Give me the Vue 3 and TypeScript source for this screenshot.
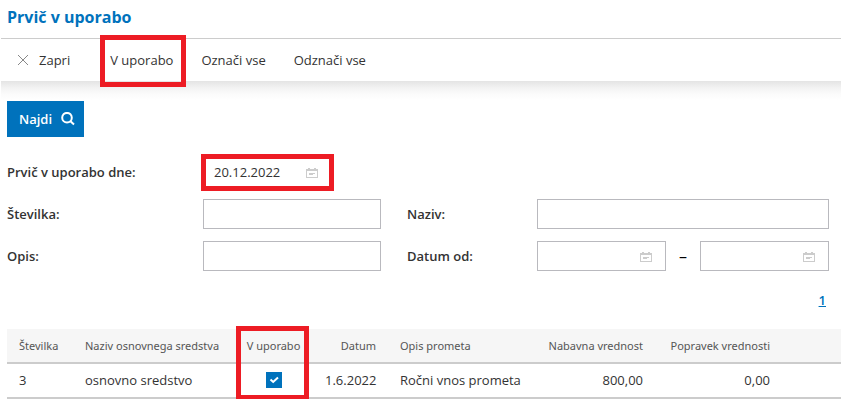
<script setup lang="ts">
import { ref, reactive } from 'vue'

interface AssetRow {
  number: number
  name: string
  inUse: boolean
  date: string
  description: string
  purchaseValue: string
  adjustment: string
}

const firstUseDate = ref('20.12.2022')
const filters = reactive({ number: '', name: '', description: '', from: '', to: '' })

const rows = ref<AssetRow[]>([
  {
    number: 3,
    name: 'osnovno sredstvo',
    inUse: true,
    date: '1.6.2022',
    description: 'Ročni vnos prometa',
    purchaseValue: '800,00',
    adjustment: '0,00',
  },
])

function markAll(value: boolean): void {
  rows.value.forEach((row) => (row.inUse = value))
}
</script>

<template>
  <main class="page">
    <h1 class="title">Prvič v uporabo</h1>

    <nav class="toolbar">
      <button type="button" class="tool close">
        <svg class="close-icon" viewBox="0 0 12 12" aria-hidden="true">
          <path d="M1 1 11 11M11 1 1 11" />
        </svg>
        Zapri
      </button>
      <button type="button" class="tool marked marked-tool">V uporabo</button>
      <button type="button" class="tool" @click="markAll(true)">Označi vse</button>
      <button type="button" class="tool" @click="markAll(false)">Odznači vse</button>
    </nav>

    <form class="search" @submit.prevent>
      <button type="submit" class="find">
        Najdi
        <svg class="find-icon" viewBox="0 0 14 14" aria-hidden="true">
          <circle cx="6" cy="5.7" r="4.8" />
          <path d="M9.5 9.2 13 12.5" />
        </svg>
      </button>

      <div class="fields">
        <label for="first-use">Prvič v uporabo dne:</label>
        <div class="wide">
          <div class="date marked marked-date">
            <input id="first-use" v-model="firstUseDate" type="text" />
            <svg class="calendar" viewBox="0 0 12 10" aria-hidden="true">
              <path class="calendar-fill" d="M0 1h2V0h2v1h4V0h2v1h2v9H0zM1 3v6h10V3z" />
              <path class="calendar-line" d="M3 5.5h6M3 6.5h4" />
            </svg>
          </div>
        </div>

        <label for="number">Številka:</label>
        <input id="number" v-model="filters.number" type="text" />
        <label for="name" class="second">Naziv:</label>
        <input id="name" v-model="filters.name" type="text" />

        <label for="description">Opis:</label>
        <input id="description" v-model="filters.description" type="text" />
        <label for="date-from" class="second">Datum od:</label>
        <div class="range">
          <div class="date">
            <input id="date-from" v-model="filters.from" type="text" />
            <svg class="calendar" viewBox="0 0 12 10" aria-hidden="true">
              <path class="calendar-fill" d="M0 1h2V0h2v1h4V0h2v1h2v9H0zM1 3v6h10V3z" />
              <path class="calendar-line" d="M3 5.5h6M3 6.5h4" />
            </svg>
          </div>
          <label for="date-to" class="dash">–</label>
          <div class="date">
            <input id="date-to" v-model="filters.to" type="text" />
            <svg class="calendar" viewBox="0 0 12 10" aria-hidden="true">
              <path class="calendar-fill" d="M0 1h2V0h2v1h4V0h2v1h2v9H0zM1 3v6h10V3z" />
              <path class="calendar-line" d="M3 5.5h6M3 6.5h4" />
            </svg>
          </div>
        </div>
      </div>
    </form>

    <div class="pager"><a href="#">1</a></div>

    <div class="results">
      <table>
        <colgroup>
          <col class="c-number" />
          <col class="c-name" />
          <col class="c-use" />
          <col class="c-date" />
          <col class="c-description" />
          <col class="c-value" />
          <col class="c-adjustment" />
          <col />
        </colgroup>
        <thead>
          <tr>
            <th>Številka</th>
            <th>Naziv osnovnega sredstva</th>
            <th class="center marked marked-column">V uporabo</th>
            <th class="right">Datum</th>
            <th>Opis prometa</th>
            <th class="right">Nabavna vrednost</th>
            <th class="right">Popravek vrednosti</th>
            <th></th>
          </tr>
        </thead>
        <tbody>
          <tr v-for="row in rows" :key="row.number">
            <td>{{ row.number }}</td>
            <td>{{ row.name }}</td>
            <td class="center">
              <label class="check">
                <input v-model="row.inUse" type="checkbox" aria-label="V uporabo" />
                <svg v-if="row.inUse" viewBox="0 0 16 16" aria-hidden="true">
                  <path d="M4.5 7.5 7.2 10 12 5.5" />
                </svg>
              </label>
            </td>
            <td class="right">{{ row.date }}</td>
            <td>{{ row.description }}</td>
            <td class="right">{{ row.purchaseValue }}</td>
            <td class="right">{{ row.adjustment }}</td>
            <td></td>
          </tr>
        </tbody>
      </table>
    </div>
  </main>
</template>

<style>
body {
  background: #fff;
}
</style>

<style scoped>
.page,
.page * {
  box-sizing: border-box;
}

.page {
  padding-right: 9px;
  font-family: 'Open Sans', sans-serif;
  font-size: 13px;
  line-height: 18px;
  color: #333;
}

button,
input {
  font: inherit;
  color: inherit;
}

.title {
  margin: 0;
  padding: 5px 7px 9px;
  font-size: 16px;
  line-height: 24px;
  font-weight: 700;
  color: #0072bc;
}

.toolbar {
  display: flex;
  gap: 28px;
  height: 43px;
  margin-left: 1px;
  padding-left: 16px;
  border-top: 1px solid #ccc;
}

.tool {
  display: flex;
  align-items: center;
  padding: 0;
  border: 0;
  background: none;
  white-space: nowrap;
  cursor: pointer;
}

.close {
  gap: 10px;
  margin-right: 12px;
}

.close-icon {
  width: 12px;
  height: 12px;
  fill: none;
  stroke: #888;
}

/* Red frames that call out the steps to follow */
.marked {
  position: relative;
}

.marked::after {
  content: '';
  position: absolute;
  z-index: 1;
  border: 5px solid #ed1c24;
  pointer-events: none;
}

.marked-tool::after {
  inset: -4px -13px -6px -10px;
}

.marked-date::after {
  inset: -3px -2px -4px;
}

.marked-column::after {
  inset: -3px 4px -38px 2px;
}

.search {
  margin-left: 1px;
  padding: 20px 12px 0 6px;
  background: linear-gradient(#e4e4e4, #f3f3f3 7px, #fbfbfb 13px, #fff 19px) no-repeat;
  background-size: 100% 19px;
}

.find {
  display: flex;
  align-items: center;
  gap: 9px;
  height: 36px;
  padding: 0 9px 0 12px;
  border: 0;
  background: #0072bc;
  color: #fff;
  font-weight: 600;
  cursor: pointer;
}

.find-icon {
  width: 14px;
  height: 14px;
  fill: none;
  stroke: #fff;
  stroke-width: 2;
}

.fields {
  display: grid;
  grid-template-columns: 196px minmax(0, 178fr) 156px minmax(0, 292fr);
  row-gap: 12px;
  align-items: center;
  padding-top: 20px;
}

.fields label {
  font-weight: 600;
}

.fields .second {
  padding-left: 26px;
}

.fields input {
  display: block;
  width: 100%;
  height: 30px;
  padding: 0 10px;
  border: 1px solid #b9b9be;
  border-radius: 0;
  background: #fff;
  outline: 0;
}

.wide {
  grid-column: 2 / -1;
}

.date {
  position: relative;
  flex: 1;
  min-width: 0;
  max-width: 129px;
}

.calendar {
  position: absolute;
  top: 11px;
  right: 14px;
  width: 12px;
  height: 10px;
}

.calendar-fill {
  fill: #ccc;
  fill-rule: evenodd;
}

.calendar-line {
  fill: none;
  stroke: #ccc;
}

.range {
  display: flex;
  align-items: center;
  justify-content: space-between;
}

.fields .dash {
  flex: none;
  width: 34px;
  font-size: 16px;
  font-weight: 400;
  text-align: center;
  color: #000;
}

.pager {
  padding: 20px 15px 20px;
  text-align: right;
}

.pager a {
  color: #0072bc;
  font-weight: 600;
}

.results {
  padding-left: 7px;
}

table {
  width: 100%;
  table-layout: fixed;
  border-collapse: separate;
  border-spacing: 0;
}

.c-number {
  width: 66px;
}

.c-name {
  width: 161px;
}

.c-use {
  width: 79px;
}

.c-date {
  width: 75px;
}

.c-description {
  width: 145px;
}

.c-value {
  width: 122px;
}

.c-adjustment {
  width: 127px;
}

th,
td {
  height: 35px;
  padding: 0 12px;
  border-bottom: 2px solid #ccc;
  text-align: left;
  white-space: nowrap;
}

th {
  background: #f6f6f6;
  color: #555;
  font-family: 'Noto Sans', 'Open Sans', sans-serif;
  font-size: 11px;
  font-weight: 400;
}

td {
  padding-bottom: 1px;
}

.right {
  text-align: right;
}

.center {
  padding: 0;
  text-align: center;
}

.check {
  display: grid;
  justify-content: center;
  padding-bottom: 1px;
}

.check input,
.check svg {
  grid-area: 1 / 1;
  width: 16px;
  height: 16px;
}

.check input {
  appearance: none;
  margin: 0;
  border: 1px solid #0072bc;
  background: #fff;
}

.check input:checked {
  background: #0072bc;
}

.check svg {
  fill: none;
  stroke: #fff;
  stroke-width: 2;
  pointer-events: none;
}
</style>
